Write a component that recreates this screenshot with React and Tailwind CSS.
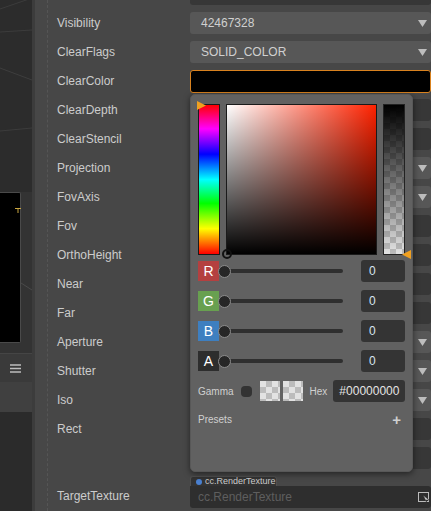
import React from "react";

const font = { fontFamily: '"Liberation Sans", Arial, sans-serif' };

const rows = [
  { label: "Visibility", type: "select", value: "42467328" },
  { label: "ClearFlags", type: "select", value: "SOLID_COLOR" },
  { label: "ClearColor", type: "color" },
  { label: "ClearDepth", type: "number" },
  { label: "ClearStencil", type: "number" },
  { label: "Projection", type: "select" },
  { label: "FovAxis", type: "select" },
  { label: "Fov", type: "number" },
  { label: "OrthoHeight", type: "number" },
  { label: "Near", type: "number" },
  { label: "Far", type: "number" },
  { label: "Aperture", type: "select" },
  { label: "Shutter", type: "select" },
  { label: "Iso", type: "select" },
  { label: "Rect", type: "number" },
  { label: "", type: "number" },
];

const checker =
  "bg-[repeating-conic-gradient(#bcbcbc_0%_25%,#e2e2e2_0%_50%)] bg-[length:12px_12px]";

function Caret() {
  return (
    <svg width="9" height="7" viewBox="0 0 9 7" className="shrink-0">
      <path d="M0 0 H9 L4.5 7 Z" fill="#bdbdbd" />
    </svg>
  );
}

function Field({ row }) {
  if (row.type === "select") {
    return (
      <div className="flex h-[22px] flex-1 items-center justify-between rounded-[3px] bg-[#575757] pl-[11px] pr-[4px] text-[12px] text-[#d0d0d0]">
        <span>{row.value}</span>
        <Caret />
      </div>
    );
  }
  if (row.type === "color") {
    return (
      <div className="h-[23px] flex-1 rounded-[3px] border border-[#d9821f] bg-black"></div>
    );
  }
  return <div className="h-[22px] flex-1 rounded-[3px] bg-[#373737]"></div>;
}

function SceneStrip() {
  return (
    <div className="flex h-full w-[32px] shrink-0 flex-col bg-[#2b2b2b]">
      <svg width="32" height="192" viewBox="0 0 32 192" className="block">
        <rect width="32" height="192" fill="#2c2c2c" />
        <line x1="0" y1="9" x2="32" y2="-2" stroke="#3c3c3c" strokeWidth="1" />
        <line x1="0" y1="32" x2="32" y2="30" stroke="#3c3c3c" strokeWidth="1" />
        <line x1="0" y1="68" x2="32" y2="80" stroke="#3e3e3e" strokeWidth="1" />
        <line x1="0" y1="131" x2="32" y2="128" stroke="#3c3c3c" strokeWidth="1" />
      </svg>
      <div className="flex h-[151px] bg-[#333333]">
        <div className="relative h-full w-[21px] rounded-r-[2px] border border-l-0 border-[#4a4a4a] bg-black">
          <svg width="6" height="6" viewBox="0 0 6 6" className="absolute left-[15px] top-[15px]">
            <path d="M0 0.5 H6 M3 0.5 V5" stroke="#c9a640" strokeWidth="1" />
          </svg>
        </div>
        <svg width="11" height="151" viewBox="0 0 11 151" className="block">
          <line x1="0" y1="91" x2="11" y2="98" stroke="#4a4a4a" strokeWidth="1" />
        </svg>
      </div>
      <div className="h-[10px] bg-[#333333]"></div>
      <div className="flex h-[29px] items-center justify-end border-t border-[#454545] bg-[#3a3a3a] pr-[11px]">
        <svg width="11" height="9" viewBox="0 0 11 9">
          <path d="M0 1 H11 M0 4.5 H11 M0 8 H11" stroke="#bdbdbd" strokeWidth="1.5" />
        </svg>
      </div>
      <div className="h-[30px] bg-[#404040]"></div>
      <div className="flex-1 bg-[#2b2b2b]"></div>
    </div>
  );
}

function Triangle({ dir }) {
  return (
    <svg width="9" height="9" viewBox="0 0 9 9">
      {dir === "right" ? (
        <path d="M0 0 L9 4.5 L0 9 Z" fill="#f0a020" />
      ) : (
        <path d="M9 0 L0 4.5 L9 9 Z" fill="#f0a020" />
      )}
    </svg>
  );
}

function ChannelRow({ ch, color }) {
  return (
    <div className="flex h-[22px] items-center">
      <div
        className={
          "flex h-[20px] w-[21px] items-center justify-center text-[14px] text-white " + color
        }
      >
        {ch}
      </div>
      <div className="relative ml-[6px] flex h-[13px] w-[118px] items-center">
        <div className="h-[4px] w-full rounded-full bg-[#2f2f2f]"></div>
        <div className="absolute left-[-7px] top-0 h-[13px] w-[13px] rounded-full border-[1.5px] border-[#8c8c8c] bg-[#262626]"></div>
      </div>
      <div className="ml-auto flex h-[22px] w-[44px] items-center rounded-[3px] bg-[#343434] pl-[8px] text-[12px] text-[#d8e4f0]">
        0
      </div>
    </div>
  );
}

function ColorPicker() {
  return (
    <div className="absolute left-[190px] top-[94px] h-[378px] w-[223px] rounded-[5px] border border-[#585858] bg-[#616161] px-[7px] pt-[9px] shadow-[0_2px_6px_rgba(0,0,0,0.5)]">
      <div className="flex h-[151px] items-stretch">
        <div className="relative w-[22px] border border-[#1a1a1a] bg-[linear-gradient(to_bottom,#ff0000,#ff00ff_16%,#0000ff_33%,#00ffff_50%,#00ff00_66%,#ffff00_83%,#ff0000)]">
          <div className="absolute left-[-2px] top-[-4px]">
            <Triangle dir="right" />
          </div>
        </div>
        <div className="relative ml-[6px] w-[152px] border border-[#1a1a1a] bg-[#ff2200]">
          <div className="absolute inset-0 bg-[linear-gradient(to_right,#ffffff,rgba(255,255,255,0))]"></div>
          <div className="absolute inset-0 bg-[linear-gradient(to_bottom,rgba(0,0,0,0),#000000)]"></div>
          <div className="absolute bottom-[-5px] left-[-5px] h-[10px] w-[10px] rounded-full border-2 border-[#111111]"></div>
        </div>
        <div className={"relative ml-[6px] w-[22px] border border-[#222222] " + checker}>
          <div className="absolute inset-0 bg-[linear-gradient(to_bottom,#000000,rgba(0,0,0,0))]"></div>
          <div className="absolute bottom-[-5px] right-[-7px]">
            <Triangle dir="left" />
          </div>
        </div>
      </div>
      <div className="mt-[5px] flex flex-col gap-[8px]">
        <ChannelRow ch="R" color="bg-[#b44040]" />
        <ChannelRow ch="G" color="bg-[#68a050]" />
        <ChannelRow ch="B" color="bg-[#3e7fc0]" />
        <ChannelRow ch="A" color="bg-[#2d2d2d]" />
      </div>
      <div className="mt-[8px] flex h-[22px] items-center text-[10px] text-[#d0d0d0]">
        <span>Gamma</span>
        <div className="ml-[7px] h-[11px] w-[11px] rounded-[4px] bg-[#333333]"></div>
        <div className={"ml-[8px] h-[20px] w-[20px] " + checker}></div>
        <div className={"ml-[3px] h-[20px] w-[20px] " + checker}></div>
        <span className="ml-[7px]">Hex</span>
        <div className="ml-[6px] flex h-[22px] flex-1 items-center rounded-[3px] bg-[#343434] pl-[6px] text-[12px] text-[#e4e4e4]">
          #00000000
        </div>
      </div>
      <div className="mt-[10px] flex items-center justify-between text-[10px] text-[#d0d0d0]">
        <span>Presets</span>
        <span className="pr-[4px] text-[15px] font-bold leading-none text-[#cfcfcf]">+</span>
      </div>
    </div>
  );
}

export default function App() {
  return (
    <div className="relative flex h-[511px] w-[431px] overflow-hidden bg-[#474747]" style={font}>
      <SceneStrip />
      <div className="w-[3px] shrink-0 bg-[#3c3c3c]"></div>

      {/* Inspector */}
      <div className="relative flex-1 bg-[#474747]">
        <div className="absolute bottom-0 left-[12px] top-0 border-l border-dashed border-[#555555]"></div>
        <div className="flex flex-col">
          <div className="flex h-[5px]">
            <div className="w-[155px]"></div>
            <div className="flex-1 rounded-b-[3px] bg-[#373737]"></div>
          </div>
          <div className="mt-[7px] flex flex-col gap-[7px]">
            {rows.map((row, i) => (
              <div key={i} className="flex h-[22px] items-center">
                <div className="w-[155px] pl-[22px] text-[12px] text-[#cccccc]">{row.label}</div>
                <Field row={row} />
              </div>
            ))}
          </div>
          <div className="mt-[7px] flex">
            <div className="w-[155px] pl-[22px] pt-[11px] text-[12px] text-[#cccccc]">TargetTexture</div>
            <div className="flex flex-1 flex-col">
              <div className="flex h-[10px] w-[87px] items-center gap-[3px] rounded-t-[3px] border border-b-0 border-[#505050] bg-[#333333] pl-[5px] text-[9px] leading-none text-[#cccccc]">
                <span className="h-[6px] w-[6px] rounded-full bg-[#4a80d0]"></span>
                cc.RenderTexture
              </div>
              <div className="flex h-[22px] items-center justify-between rounded-b-[3px] rounded-tr-[3px] bg-[#2e2e2e] pl-[8px] text-[12px] text-[#5e5e5e]">
                <span>cc.RenderTexture</span>
                <svg width="12" height="12" viewBox="0 0 12 12" className="mr-[1px]">
                  <rect x="0.5" y="1.5" width="10" height="9" fill="none" stroke="#bbbbbb" />
                  <path d="M5 4 L11 9 L8 9 L9 12 Z" fill="#dddddd" stroke="#222" strokeWidth="0.5" />
                </svg>
              </div>
            </div>
          </div>
        </div>
      </div>

      <ColorPicker />
    </div>
  );
}
